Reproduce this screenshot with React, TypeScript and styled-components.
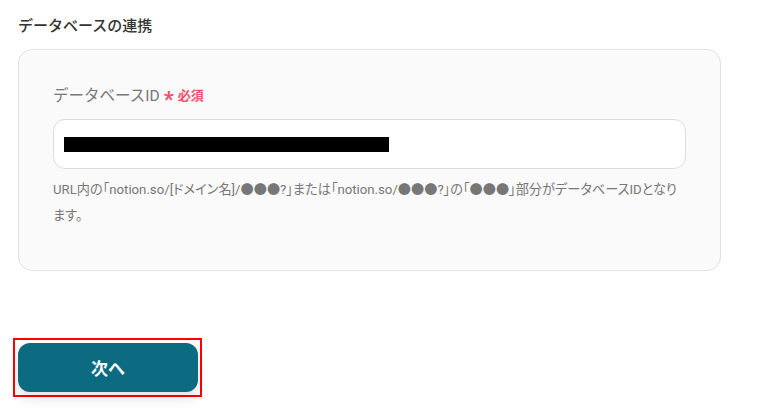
import React from 'react';
import styled, { createGlobalStyle } from 'styled-components';

const GlobalStyle = createGlobalStyle`
  body {
    margin: 0;
    background: #ffffff;
    font-family: Roboto, "Noto Sans CJK JP", sans-serif;
  }
`;

const Page = styled.div`
  width: 760px;
  height: 418px;
  padding: 15px 0 0 18px;
  box-sizing: border-box;
  overflow: hidden;
`;

const Title = styled.h2`
  margin: 0;
  font-size: 15px;
  font-weight: 500;
  color: #333;
  line-height: 22px;
`;

const Card = styled.section`
  margin-top: 12px;
  width: 703px;
  height: 222px;
  box-sizing: border-box;
  background: #fafafa;
  border: 1px solid #e2e2e2;
  border-radius: 14px;
  padding: 30px 34px 0;
`;

const Label = styled.div`
  display: flex;
  align-items: center;
  gap: 4px;
  font-size: 15.5px;
  color: #777;
  line-height: 24px;
`;

const Asterisk = styled.span`
  color: #f0506e;
  font-size: 22px;
  font-weight: 700;
  line-height: 1;
  margin-top: 9px;
`;

const Required = styled.span`
  color: #f0506e;
  font-size: 13px;
  font-weight: 700;
`;

const InputBox = styled.div`
  margin-top: 8px;
  height: 50px;
  box-sizing: border-box;
  background: #fff;
  border: 1px solid #dcdcdc;
  border-radius: 12px;
  display: flex;
  align-items: center;
  padding-left: 10px;
`;

const Masked = styled.div<{ $w: number }>`
  width: ${p => p.$w}px;
  height: 15px;
  background: #000;
`;

const Help = styled.p`
  margin: 8px 0 0;
  padding-right: 6px;
  font-size: 13.2px;
  line-height: 26px;
  color: #777;
  font-feature-settings: "palt";
`;

const Footer = styled.div`
  margin-top: 67px;
`;

const Highlight = styled.div`
  display: inline-block;
  margin-left: -5px;
  border: 2px solid #ff0000;
  padding: 3px 2px 3px 3px;
`;

const NextButton = styled.button`
  display: block;
  width: 180px;
  height: 49px;
  border: none;
  border-radius: 12px;
  background: #0c6a81;
  color: #fff;
  font-family: "Noto Sans CJK JP", sans-serif;
  font-size: 17px;
  font-weight: 700;
  box-shadow: 0 6px 14px rgba(0, 0, 0, 0.12);
  cursor: pointer;
`;

export default function App() {
  return (
    <Page>
      <GlobalStyle />
      <Title>データベースの連携</Title>
      <Card>
        <Label>
          データベースID
          <Asterisk>*</Asterisk>
          <Required>必須</Required>
        </Label>
        <InputBox>
          <Masked $w={325} />
        </InputBox>
        <Help>
          URL内の「notion.so/[ドメイン名]/●●●?」または「notion.so/●●●?」の「●●●」部分がデータベースIDとなります。
        </Help>
      </Card>
      <Footer>
        <Highlight>
          <NextButton>次へ</NextButton>
        </Highlight>
      </Footer>
    </Page>
  );
}
